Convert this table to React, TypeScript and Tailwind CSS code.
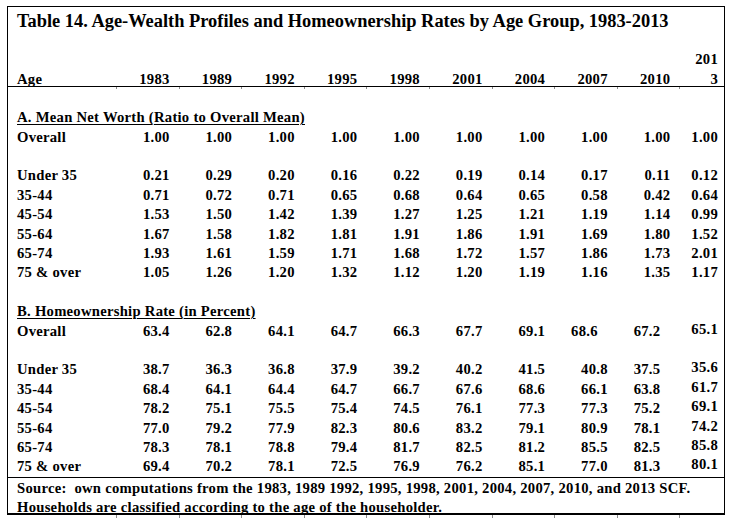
import React from "react";

const COLS = "grid grid-cols-[108px_repeat(9,62.6px)_1fr]";

const YEARS = ["1983", "1989", "1992", "1995", "1998", "2001", "2004", "2007", "2010"];

const A_ROWS: [string, string[]][] = [
  ["Overall", ["1.00", "1.00", "1.00", "1.00", "1.00", "1.00", "1.00", "1.00", "1.00", "1.00"]],
  ["", []],
  ["Under 35", ["0.21", "0.29", "0.20", "0.16", "0.22", "0.19", "0.14", "0.17", "0.11", "0.12"]],
  ["35-44", ["0.71", "0.72", "0.71", "0.65", "0.68", "0.64", "0.65", "0.58", "0.42", "0.64"]],
  ["45-54", ["1.53", "1.50", "1.42", "1.39", "1.27", "1.25", "1.21", "1.19", "1.14", "0.99"]],
  ["55-64", ["1.67", "1.58", "1.82", "1.81", "1.91", "1.86", "1.91", "1.69", "1.80", "1.52"]],
  ["65-74", ["1.93", "1.61", "1.59", "1.71", "1.68", "1.72", "1.57", "1.86", "1.73", "2.01"]],
  ["75 & over", ["1.05", "1.26", "1.20", "1.32", "1.12", "1.20", "1.19", "1.16", "1.35", "1.17"]],
];

const B_ROWS: [string, string[]][] = [
  ["Overall", ["63.4", "62.8", "64.1", "64.7", "66.3", "67.7", "69.1", "68.6", "67.2", "65.1"]],
  ["", []],
  ["Under 35", ["38.7", "36.3", "36.8", "37.9", "39.2", "40.2", "41.5", "40.8", "37.5", "35.6"]],
  ["35-44", ["68.4", "64.1", "64.4", "64.7", "66.7", "67.6", "68.6", "66.1", "63.8", "61.7"]],
  ["45-54", ["78.2", "75.1", "75.5", "75.4", "74.5", "76.1", "77.3", "77.3", "75.2", "69.1"]],
  ["55-64", ["77.0", "79.2", "77.9", "82.3", "80.6", "83.2", "79.1", "80.9", "78.1", "74.2"]],
  ["65-74", ["78.3", "78.1", "78.8", "79.4", "81.7", "82.5", "81.2", "85.5", "82.5", "85.8"]],
  ["75 & over", ["69.4", "70.2", "78.1", "72.5", "76.9", "76.2", "85.1", "77.0", "81.3", "80.1"]],
];

const STD = "text-right pr-[9px]";
const LAST = "text-right pr-[6px]";

function cellClass(section: "A" | "B", rowLabel: string, i: number): string {
  if (i === 9) return section === "B" ? "text-right pr-[6px] -translate-y-[2px]" : LAST;
  if (section === "B" && i === 8) return "text-right pr-[19px]";
  if (section === "B" && i === 7 && rowLabel === "Overall") return "text-right pr-[19px]";
  return STD;
}

function Row({ label, vals, section }: { label: string; vals: string[]; section: "A" | "B" }) {
  return (
    <div className={`${COLS} h-[19.4px] leading-[19.4px]`}>
      <div className="pl-[9px] whitespace-nowrap">{label}</div>
      {vals.map((v, i) => (
        <div key={i} className={cellClass(section, label, i)}>
          {v}
        </div>
      ))}
    </div>
  );
}

function Ticks({ h }: { h: string }) {
  return (
    <div className={`${COLS} ${h}`}>
      <div />
      {Array.from({ length: 10 }).map((_, i) => (
        <div key={i} className="border-l border-[#8a8a8a]" />
      ))}
    </div>
  );
}

export default function App() {
  return (
    <div className="w-[732px] h-[519px] bg-white overflow-hidden [font-family:Liberation_Serif,Times_New_Roman,serif] font-bold text-black text-[14.67px] tracking-[0.26px]">
      <div className="ml-[7px] mt-[6px] w-[718px] border border-black border-b-2">
        {/* title */}
        <div className="pt-[4px] pl-[9px] h-[24px] leading-[20px] text-[18.4px] tracking-normal whitespace-nowrap">
          Table 14. Age-Wealth Profiles and Homeownership Rates by Age Group, 1983-2013
        </div>
        {/* header */}
        <div className={`${COLS} h-[56px] border-b border-black items-end`}>
          <div className="pl-[9px] leading-[19.5px] translate-y-[3px]">Age</div>
          {YEARS.map((y) => (
            <div key={y} className={`${STD} leading-[19.5px] translate-y-[3px]`}>
              {y}
            </div>
          ))}
          <div className={`${LAST} leading-[19.5px] translate-y-[3px]`}>
            201
            <br />3
          </div>
        </div>
        <Ticks h="h-[2px]" />
        <div className="h-[19.3px]" />
        {/* Section A */}
        <div className="border-b border-black">
          <div className="h-[19.4px] leading-[19.4px] pl-[9px]">
            <span className="underline decoration-1 underline-offset-[2px]">A. Mean Net Worth (Ratio to Overall Mean)</span>
          </div>
          {A_ROWS.map(([l, v], i) => (
            <Row key={"a" + i} label={l} vals={v} section="A" />
          ))}
          <div className="h-[19.4px]" />
          <div className="h-[19.4px] leading-[19.4px] pl-[9px]">
            <span className="underline decoration-1 underline-offset-[2px]">B. Homeownership Rate (in Percent)</span>
          </div>
          {B_ROWS.map(([l, v], i) => (
            <Row key={"b" + i} label={l} vals={v} section="B" />
          ))}
        </div>
        {/* footer */}
        <div className="h-[35.5px] pt-[1px] pl-[9px] leading-[19px] whitespace-nowrap">
          <div>Source:&nbsp; own computations from the 1983, 1989 1992, 1995, 1998, 2001, 2004, 2007, 2010, and 2013 SCF.</div>
          <div>Households are classified according to the age of the householder.</div>
        </div>
      </div>
      <div className="ml-[8px] w-[716px]">
        <Ticks h="h-[3px]" />
      </div>
    </div>
  );
}
